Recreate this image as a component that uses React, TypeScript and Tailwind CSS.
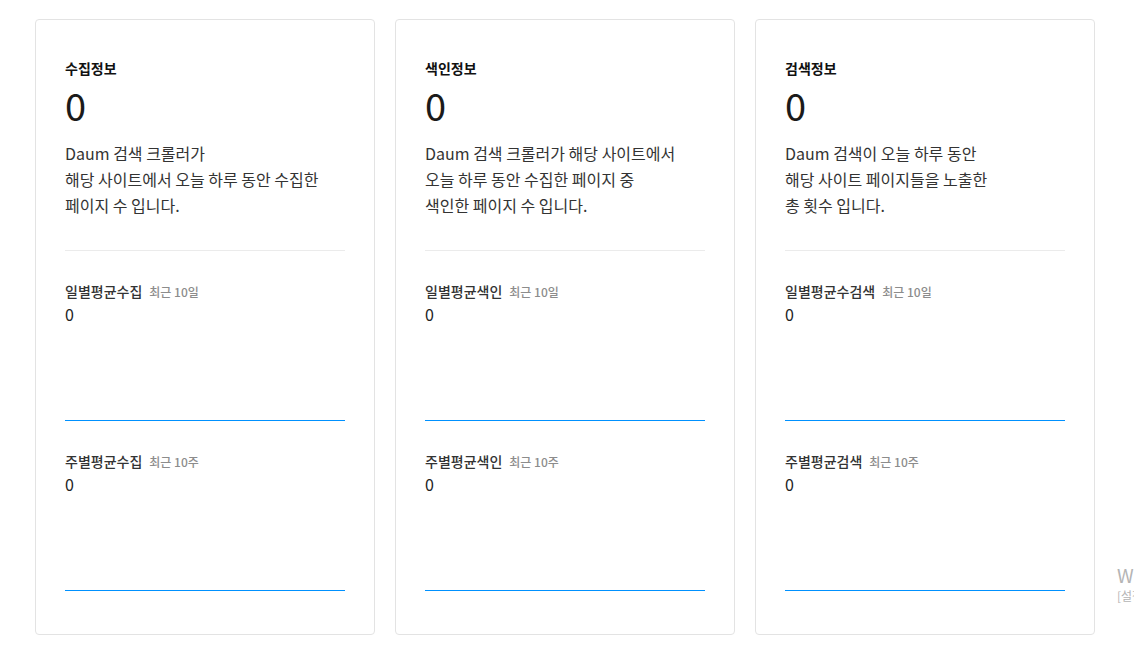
type Metric = {
  label: string;
  period: string;
  value: string;
};

type Card = {
  title: string;
  total: string;
  desc: string[];
  metrics: Metric[];
};

const CARDS: Card[] = [
  {
    title: "수집정보",
    total: "0",
    desc: ["Daum 검색 크롤러가", "해당 사이트에서 오늘 하루 동안 수집한", "페이지 수 입니다."],
    metrics: [
      { label: "일별평균수집", period: "최근 10일", value: "0" },
      { label: "주별평균수집", period: "최근 10주", value: "0" },
    ],
  },
  {
    title: "색인정보",
    total: "0",
    desc: ["Daum 검색 크롤러가 해당 사이트에서", "오늘 하루 동안 수집한 페이지 중", "색인한 페이지 수 입니다."],
    metrics: [
      { label: "일별평균색인", period: "최근 10일", value: "0" },
      { label: "주별평균색인", period: "최근 10주", value: "0" },
    ],
  },
  {
    title: "검색정보",
    total: "0",
    desc: ["Daum 검색이 오늘 하루 동안", "해당 사이트 페이지들을 노출한", "총 횟수 입니다."],
    metrics: [
      { label: "일별평균수검색", period: "최근 10일", value: "0" },
      { label: "주별평균검색", period: "최근 10주", value: "0" },
    ],
  },
];

const FONT = "font-['Noto_Sans_CJK_KR','Noto_Sans',sans-serif]";

export default function App() {
  return (
    <main className={`relative h-[651px] w-[1134px] overflow-hidden bg-white text-[#222] ${FONT}`}>
      <div className="flex gap-5 pl-[35px] pt-[19px]">
        {CARDS.map((card) => (
          <StatCard key={card.title} card={card} />
        ))}
      </div>

      {/* windows activation watermark, cut off by the window edge */}
      <div className="absolute left-[1117px] top-[563px] whitespace-nowrap text-[#b4b4b4]">
        <div className="text-[19px] leading-[24px]">Windows 정품 인증</div>
        <div className="text-[12px] leading-[17px]">[설정]으로 이동하여 Windows를 정품 인증합니다.</div>
      </div>
    </main>
  );
}

function StatCard(props: { card: Card }) {
  const { card } = props;
  return (
    <section className="h-[616px] w-[340px] rounded-[4px] border border-[#e3e3e3] px-[29px] pt-[38px]">
      <h2 className="text-[14px] font-bold leading-[20px] text-[#111]">{card.title}</h2>
      <div className="mt-[5px] text-[38px] leading-[44px] text-[#1a1a1a]">{card.total}</div>
      <p className="mt-[13px] text-[16px] leading-[26px] text-[#333]">
        {card.desc.map((line) => (
          <span key={line} className="block">
            {line}
          </span>
        ))}
      </p>
      <div className="mt-[32px] border-t border-[#ebebeb]" />
      {card.metrics.map((m) => (
        <div key={m.label} className="mt-[30px]">
          <div className="flex items-baseline gap-[7px] leading-[20px]">
            <span className="text-[14px] font-medium text-[#333]">{m.label}</span>
            <span className="text-[12px] font-medium text-[#8c8c8c]">{m.period}</span>
          </div>
          <div className="mt-[1px] text-[16px] leading-[22px] text-[#222]">{m.value}</div>
          <div className="h-[95px]" />
          <div className="border-t border-[#0091ff]" />
        </div>
      ))}
    </section>
  );
}
